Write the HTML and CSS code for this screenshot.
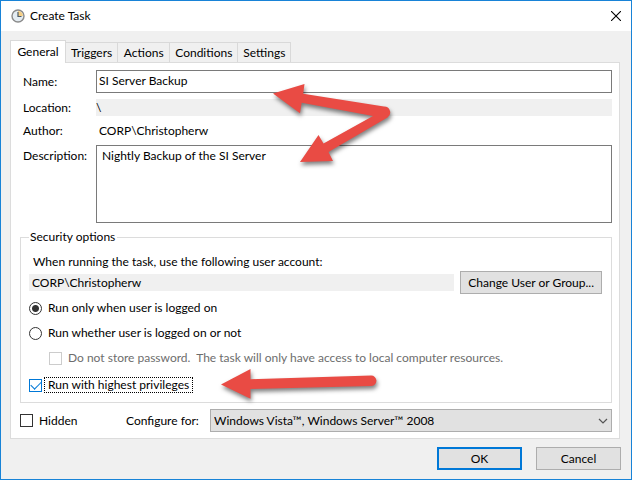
FILE: index.html
```html
<!DOCTYPE html>
<html lang="en">

<head>
    <meta charset="utf-8">
    <title>Create Task</title>
    <link rel="stylesheet" href="styles.css">
</head>

<body>
    <div class="window">
        <header class="titlebar">
            <svg class="clock" viewBox="0 0 14 14" width="14" height="14">
                <circle cx="7" cy="7" r="6" fill="#e4ecf2" stroke="#8a8a8a" stroke-width="1.4" />
                <path d="M7 7V2a5 5 0 0 1 5 5z" fill="#f6cf85" />
                <path d="M7 3v4.500h3.500" fill="none" stroke="#4b5a68" stroke-width="1.200" />
            </svg>
            <h1>Create Task</h1>
            <button class="close" type="button" aria-label="Close">
                <svg viewBox="0 0 10 10" width="10" height="10">
                    <path d="M0 0L10 10M10 0L0 10" stroke="#000" stroke-width="1.1" />
                </svg>
            </button>
        </header>

        <form class="content">
            <div class="tabs" role="tablist">
                <button class="tab active" type="button" role="tab" aria-selected="true">General</button>
                <button class="tab" type="button" role="tab">Triggers</button>
                <button class="tab" type="button" role="tab">Actions</button>
                <button class="tab" type="button" role="tab">Conditions</button>
                <button class="tab" type="button" role="tab">Settings</button>
            </div>

            <div class="panel">
                <div class="fields">
                    <label for="name">Name:</label>
                    <input class="textbox" id="name" type="text" value="SI Server Backup">
                    <label for="location">Location:</label>
                    <input class="readonly" id="location" type="text" value="\" readonly>
                    <span>Author:</span>
                    <span class="author">CORP\Christopherw</span>
                    <label class="top" for="description">Description:</label>
                    <textarea class="textbox" id="description">Nightly Backup of the SI Server</textarea>
                </div>

                <fieldset class="security">
                    <legend>Security options</legend>
                    <label class="account-label" for="account">When running the task, use the following user account:</label>
                    <div class="account">
                        <input class="readonly" id="account" type="text" value="CORP\Christopherw" readonly>
                        <button class="button" type="button">Change User or Group...</button>
                    </div>
                    <label class="option"><input type="radio" name="logon" checked><span>Run only when user is logged on</span></label>
                    <label class="option"><input type="radio" name="logon"><span>Run whether user is logged on or not</span></label>
                    <label class="option nested"><input type="checkbox" disabled><span>Do not store password.&nbsp; The task will only have access to local computer resources.</span></label>
                    <label class="option last"><input class="blue" type="checkbox" checked><span class="focused">Run with highest privileges</span></label>
                </fieldset>

                <div class="configure">
                    <label class="option hidden-option"><input type="checkbox"><span>Hidden</span></label>
                    <label class="configure-label" for="configure">Configure for:</label>
                    <div class="dropdown">
                        <select id="configure">
                            <option>Windows Vista™, Windows Server™ 2008</option>
                        </select>
                        <svg class="chevron" viewBox="0 0 10 6" width="10" height="6">
                            <path d="M1 1l4 4 4-4" fill="none" stroke="#555" stroke-width="1.200" />
                        </svg>
                    </div>
                </div>
            </div>

            <div class="actions">
                <button class="button ok" type="button">OK</button>
                <button class="button" type="button">Cancel</button>
            </div>
        </form>

        <!-- callout arrows over the form -->
        <svg class="arrow arrow-fields" viewBox="0 0 120 84" width="120" height="84">
            <path d="M3 13.500L34.500 4L33.200 13.700L114 26.500A6 6 0 0 1 117.500 37.500L58.500 72L63 81L30 82L48.500 55L53.500 63.500L103 36L31.700 22.800L30 33.300Z" />
        </svg>
        <svg class="arrow arrow-privileges" viewBox="0 0 160 34" width="160" height="34">
            <path d="M1 17.500L30.500 2V12.200L151 8.600A5.200 5.200 0 0 1 151.500 19L30.500 22V31.700Z" />
        </svg>
    </div>
</body>

</html>
```

FILE: styles.css
```css
* {
    box-sizing: border-box;
}

body {
    margin: 0;
    font-family: Lato, "Open Sans", sans-serif;
    font-size: 12px;
    line-height: 16px;
    color: #000;
}

button,
input,
select,
textarea {
    margin: 0;
    font: inherit;
    color: inherit;
}

.window {
    position: relative;
    min-height: 100vh;
    border: 1px solid #1883d7;
    background: #f0f0f0;
}

.titlebar {
    display: flex;
    align-items: center;
    height: 30px;
    padding: 0 10px;
    background: #fff;
}

.titlebar h1 {
    flex: 1;
    margin: 0 0 0 5px;
    font-size: 12px;
    font-weight: normal;
}

.close {
    display: flex;
    padding: 0;
    border: none;
    background: none;
}

.content {
    padding: 9px 11px 9px 9px;
}

.tabs {
    display: flex;
    align-items: flex-end;
}

.tab {
    height: 20px;
    min-width: 52px;
    padding: 0 5px;
    border: 1px solid #d9d9d9;
    border-bottom: none;
    border-left: none;
    background: #f0f0f0;
}

.tab.active {
    position: relative;
    height: 23px;
    min-width: 56px;
    margin-bottom: -1px;
    border-left: 1px solid #d9d9d9;
    background: #fff;
}

.panel {
    padding: 7px 7px 6px 9px;
    border: 1px solid #dcdcdc;
    background: #fff;
}

.fields {
    display: grid;
    grid-template-columns: 73px 1fr;
    align-items: center;
    padding-left: 3px;
    row-gap: 6px;
}

.textbox {
    width: 100%;
    height: 23px;
    padding: 0 2px 2px;
    border: 1px solid #7a7a7a;
    background: #fff;
}

textarea.textbox {
    display: block;
    height: 78px;
    padding: 2px 5px;
    resize: none;
}

.readonly {
    width: 100%;
    height: 17px;
    padding: 0;
    border: none;
    background: #f0f0f0;
}

.author {
    padding: 1px 3px 0;
}

.top {
    align-self: start;
    padding-top: 3px;
}

.security {
    margin: 6px 0 0;
    padding: 9px 9px 9px 8px;
    border: 1px solid #dcdcdc;
}

.security legend {
    padding: 0 2px 0 1px;
}

.account-label {
    display: block;
    padding-left: 4px;
}

.account {
    display: flex;
    align-items: center;
    gap: 6px;
    margin: 1px 0 6px;
}

.account .readonly {
    flex: 1;
    padding-left: 3px;
}

.button {
    height: 23px;
    min-width: 85px;
    padding: 0 7px;
    border: 1px solid #adadad;
    background: #e1e1e1;
}

.button.ok {
    border: 2px solid #0078d7;
}

.option {
    display: flex;
    align-items: center;
    gap: 6px;
    height: 16px;
    margin-bottom: 9px;
}

.option.nested {
    margin-bottom: 11px;
    padding-left: 20px;
    color: #6d6d6d;
}

.option.last {
    margin-bottom: 0;
}

.option input {
    width: 13px;
    height: 13px;
    border: 1px solid #333;
    background: #fff;
    appearance: none;
}

.option input[type="radio"] {
    border-radius: 50%;
}

.option input[type="radio"]:checked {
    background: radial-gradient(circle, #333 3px, #fff 4px);
}

.option input:disabled {
    border-color: #ccc;
}

.option input.blue {
    display: grid;
    place-items: center;
    border-color: #0078d7;
}

.option input.blue::after {
    content: "";
    width: 9px;
    height: 5px;
    margin-bottom: 3px;
    border-bottom: 1px solid #0078d7;
    border-left: 1px solid #0078d7;
    transform: rotate(-45deg);
}

.focused {
    margin-left: -3px;
    padding: 0 3px;
    line-height: 14px;
    outline: 1px dotted #000;
}

.configure {
    display: flex;
    align-items: center;
    margin-top: 6px;
}

.hidden-option {
    width: 106px;
    margin-bottom: 0;
}

.configure-label {
    width: 84px;
}

.dropdown {
    position: relative;
    flex: 1;
}

.dropdown select {
    display: block;
    width: 100%;
    height: 23px;
    padding: 0 24px 0 3px;
    border: 1px solid #adadad;
    border-radius: 0;
    background: #e1e1e1;
    appearance: none;
}

.chevron {
    position: absolute;
    top: 9px;
    right: 4px;
    pointer-events: none;
}

.actions {
    display: flex;
    justify-content: flex-end;
    gap: 14px;
    margin: 8px -1px 0 0;
}

.arrow {
    position: absolute;
    overflow: visible;
    fill: #e94b44;
    filter: drop-shadow(1px 3px 2px rgba(0, 0, 0, 0.5));
    pointer-events: none;
}

.arrow-fields {
    top: 79px;
    left: 269px;
}

.arrow-privileges {
    top: 366px;
    left: 219px;
}
```
